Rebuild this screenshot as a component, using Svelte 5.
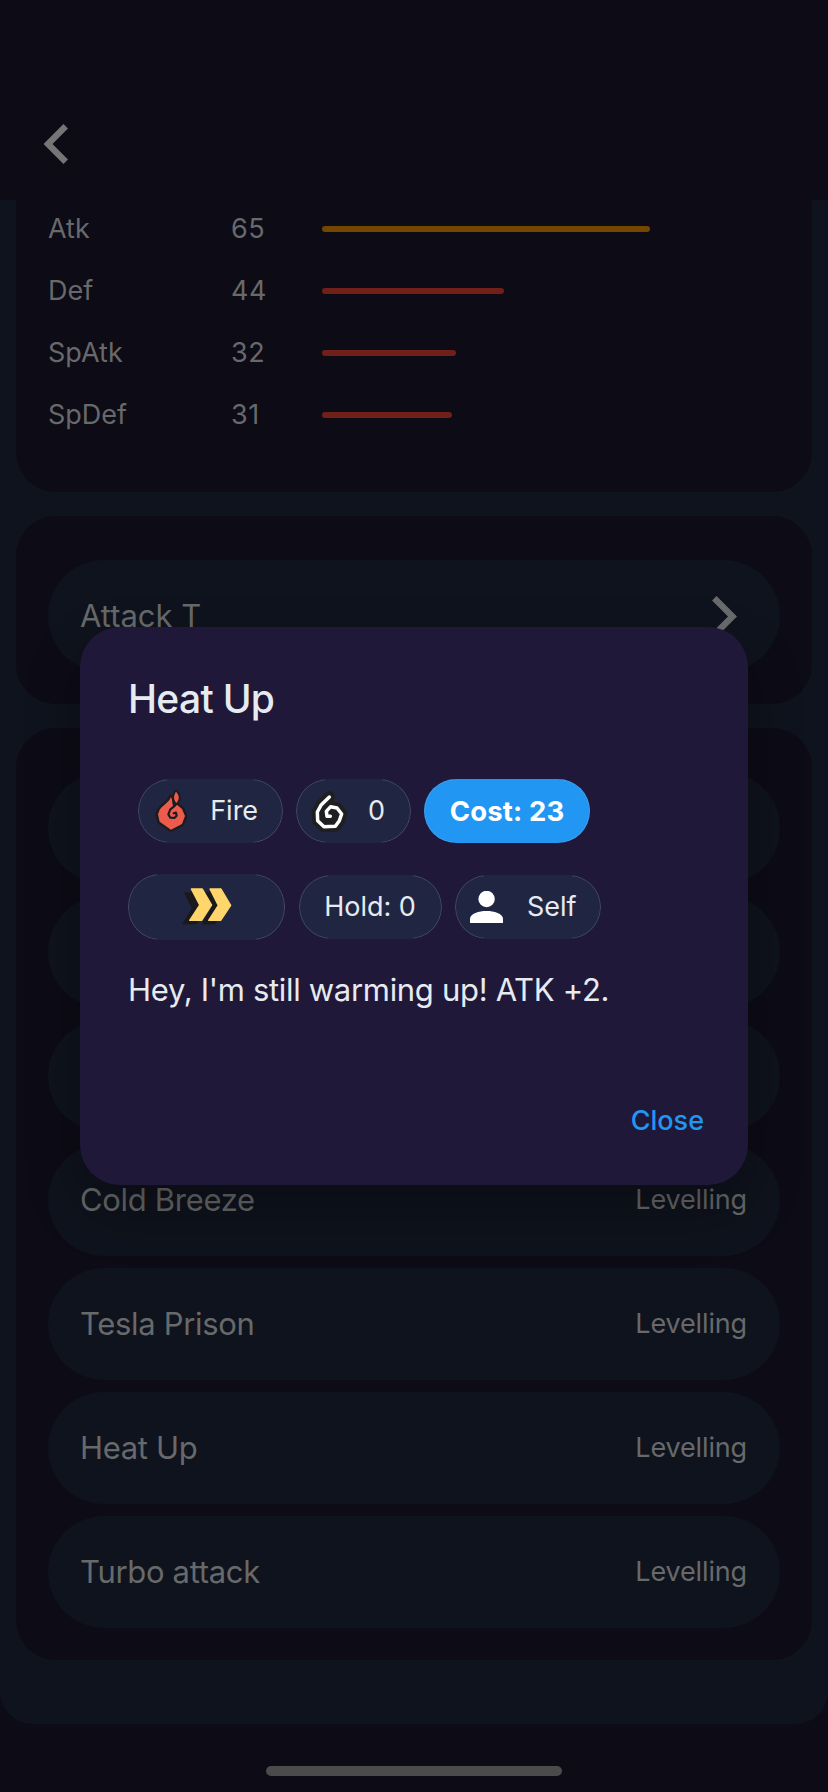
<script>
  const stats = [
    { name: 'Atk', value: 65, width: 327.5, tone: 'orange' },
    { name: 'Def', value: 44, width: 182, tone: 'red' },
    { name: 'SpAtk', value: 32, width: 134, tone: 'red' },
    { name: 'SpDef', value: 31, width: 129.5, tone: 'red' }
  ];
  const techniques = ['', '', '', 'Cold Breeze', 'Tesla Prison', 'Heat Up', 'Turbo attack'];
</script>

<div class="screen">
  <header class="topbar">
    <svg class="back" width="24" height="40" viewBox="0 0 24 40"><path d="M21.7 2.3 4 20l17.700 17.700" /></svg>
  </header>

  <main class="panel">
    <section class="card stats">
      {#each stats as s}
        <div class="stat">
          <span class="stat-name">{s.name}</span>
          <span class="stat-value">{s.value}</span>
          <div class="bar {s.tone}" style="width: {s.width}px"></div>
        </div>
      {/each}
    </section>

    <section class="card">
      <div class="row link">
        <span class="row-name wide">Attack T</span>
        <svg width="25" height="41" viewBox="0 0 25 41"><path d="M2.300 2.300 20.500 20.500 2.300 38.700" /></svg>
      </div>
    </section>

    <section class="card list">
      {#each techniques as t}
        <div class="row">
          {#if t}
            <span class="row-name">{t}</span>
            <span class="row-tag">Levelling</span>
          {/if}
        </div>
      {/each}
    </section>
  </main>

  <footer class="home"><div class="indicator"></div></footer>

  <div class="overlay">
    <div class="dialog">
      <h2>Heat Up</h2>
      <div class="chips first">
        <div class="chip fire">
          <svg width="34.667" height="46" viewBox="100 68 104 138">
            <path class="ink" stroke-width="15" d="M151 95C146 110 127 120 117 133L111 147 117 170 151 192 184 175 193 151 184 131 169 120 159 124 152 116Z" />
            <path class="ink" stroke-width="13" d="M166 80C160 90 156 99 167 111 177 102 177 92 166 80Z" />
            <path fill="#ed5b4d" d="M151 95C146 110 127 120 117 133L112 147 117 169 151 193 184 176 193 152 184 131 170 119 160 124C153 119 157 106 151 95Z" />
            <path fill="#ed5b4d" d="M166 79C160 90 156 99 167 113 177 102 177 92 166 79Z" />
            <path fill="none" stroke="#1c1b1d" stroke-width="6.500" stroke-linecap="round" stroke-linejoin="round" d="M163 121 149 132 143 147 149 157 161 158 168 151 166 142 159 144" />
          </svg>
          <span>Fire</span>
        </div>
        <div class="chip count">
          <svg width="38" height="43" viewBox="570 72 114 129">
            <path class="swirl dark" d="M628 92 604 116 592 138 593 164 612 182 646 181 658 164 665 144 651 126 632 122 619 136 621 152 632 152" />
            <path class="swirl light" d="M628 93 604 116 592 138 593 164 612 182 646 181 658 164 665 144 651 126 632 122 619 136 621 151 631 151" />
          </svg>
          <span>0</span>
        </div>
        <div class="chip cost"><span>Cost: 23</span></div>
      </div>
      <div class="chips second">
        <div class="chip priority">
          <svg width="50" height="40" viewBox="186 82 150 120">
            <g fill="#1a1a1c" stroke="#1a1a1c" stroke-width="5" stroke-linejoin="round">
              <path d="M195 100H230L258 147 227 192H190L218 147Z" />
              <path d="M252 100H287L315 147 283 192H248L276 147Z" />
            </g>
            <g fill="#ffd66b" stroke="#ffd66b" stroke-width="4" stroke-linejoin="round">
              <path d="M214 88H247L275 136 245 182H209L239 136Z" />
              <path d="M270 88H303L332 137 302 182H266L295 137Z" />
            </g>
          </svg>
        </div>
        <div class="chip hold"><span>Hold: 0</span></div>
        <div class="chip self">
          <svg width="33" height="32" viewBox="0 0 33 32">
            <circle cx="16.600" cy="8" r="8.200" fill="#fff" />
            <path fill="#fff" d="M0 32V28C0 22.500 9 20 16.500 20S33 22.500 33 28V32Z" />
          </svg>
          <span>Self</span>
        </div>
      </div>
      <p>Hey, I'm still warming up! ATK +2.</p>
      <div class="actions"><button>Close</button></div>
    </div>
  </div>
</div>

<style>
  :global(body) { margin: 0; background: #0d0b16; }
  .screen {
    position: relative; width: 828px; height: 1792px; overflow: hidden;
    background: #0d0b16; color: #67696b;
    font-family: Inter, "Liberation Sans", sans-serif; font-size: 27px;
    display: flex; flex-direction: column;
  }
  .topbar { height: 200px; box-sizing: border-box; padding: 124px 0 0 44px; }
  .topbar svg { display: block; }
  .back path { fill: none; stroke: #757575; stroke-width: 6.4; }
  .panel {
    height: 1524px; box-sizing: border-box; padding: 0 16px; background: #0f131d;
    border-radius: 0 0 32px 32px;
    display: flex; flex-direction: column; gap: 24px;
  }
  .card {
    background: #0d0b16; border-radius: 40px; box-sizing: border-box;
    padding: 44px 32px 32px; display: flex; flex-direction: column; gap: 12px;
  }
  .stats { height: 292px; border-radius: 0 0 40px 40px; padding: 0 32px; gap: 0; }
  .stat { display: grid; grid-template-columns: 183px 91px auto; align-items: center; height: 58px; padding-bottom: 4px; justify-content: start; }
  .stat span { padding-bottom: 2px; }
  .stat-value { letter-spacing: 0.6px; }
  .bar { height: 6px; border-radius: 3px; }
  .orange { background: #754600; }
  .red { background: #701f19; }
  .row {
    height: 112px; box-sizing: border-box; border-radius: 56px; background: #0f131d;
    padding: 0 33px 0 32px; display: flex; align-items: center; justify-content: space-between;
  }
  .row.link { padding-right: 43px; }
  .row.link path { fill: none; stroke: #696b6d; stroke-width: 6.4; }
  .row-name { font-size: 31px; letter-spacing: -0.32px; padding-bottom: 2px; }
  .row-name.wide { letter-spacing: 0; }
  .row-tag { letter-spacing: -0.15px; padding-bottom: 2px; }
  .home { flex: 1; display: flex; justify-content: center; padding-top: 42px; }
  .indicator { width: 296px; height: 10px; border-radius: 5px; background: #4b4b4b; }

  .overlay { position: absolute; inset: 627px 80px 607px; }
  .dialog {
    height: 558px; box-sizing: border-box; border-radius: 40px; background: #201839; color: #e6ebf0;
    padding: 48px 44px 0 48px; display: flex; flex-direction: column;
    box-shadow: 0 24px 54px rgba(0, 0, 0, 0.32);
  }
  h2 { margin: 0; font-size: 39px; line-height: 48px; font-weight: 500; letter-spacing: -0.7px; }
  .chips { display: flex; align-items: center; gap: 13px; }
  .first { margin: 56px 0 0 10px; }
  .second { margin-top: 31px; gap: 13.500px; }
  .chip {
    position: relative; height: 64px; box-sizing: border-box; border-radius: 32px;
    background: #202642; display: flex; align-items: center;
  }
  .chip span { padding-bottom: 1px; }
  .chip::after {
    content: ""; position: absolute; inset: 0; border: 1px solid rgba(190, 190, 210, 0.24); border-radius: 32px;
    mask-image: linear-gradient(to right, #000 29px, transparent 29px, transparent calc(100% - 29px), #000 calc(100% - 29px));
  }
  .fire { width: 145px; padding-left: 15.500px; gap: 22px; }
  .count { width: 115px; padding-left: 14px; gap: 20px; }
  .cost { width: 166px; justify-content: center; background: #2196f3; color: #fff; font-weight: 700; font-size: 27.500px; letter-spacing: 0.15px; }
  .priority { width: 157px; height: 66px; justify-content: center; }
  .hold { width: 143px; justify-content: center; }
  .self { width: 146px; padding-left: 15px; gap: 24px; }
  .ink { fill: #1c1b1d; stroke: #1c1b1d; stroke-linejoin: round; }
  .swirl { fill: none; stroke-linecap: round; stroke-linejoin: round; }
  .dark { stroke: #1f1e20; stroke-width: 34; }
  .light { stroke: #fff; stroke-width: 10.500; }
  p { margin: 30px 0 0; font-size: 31px; line-height: 40px; white-space: nowrap; letter-spacing: -0.31px; }
  .actions { display: flex; justify-content: flex-end; margin-top: 93px; }
  button { border: 0; background: none; padding: 0; color: #2196f3; font: 500 27px/36px Inter, "Liberation Sans", sans-serif; }
</style>
